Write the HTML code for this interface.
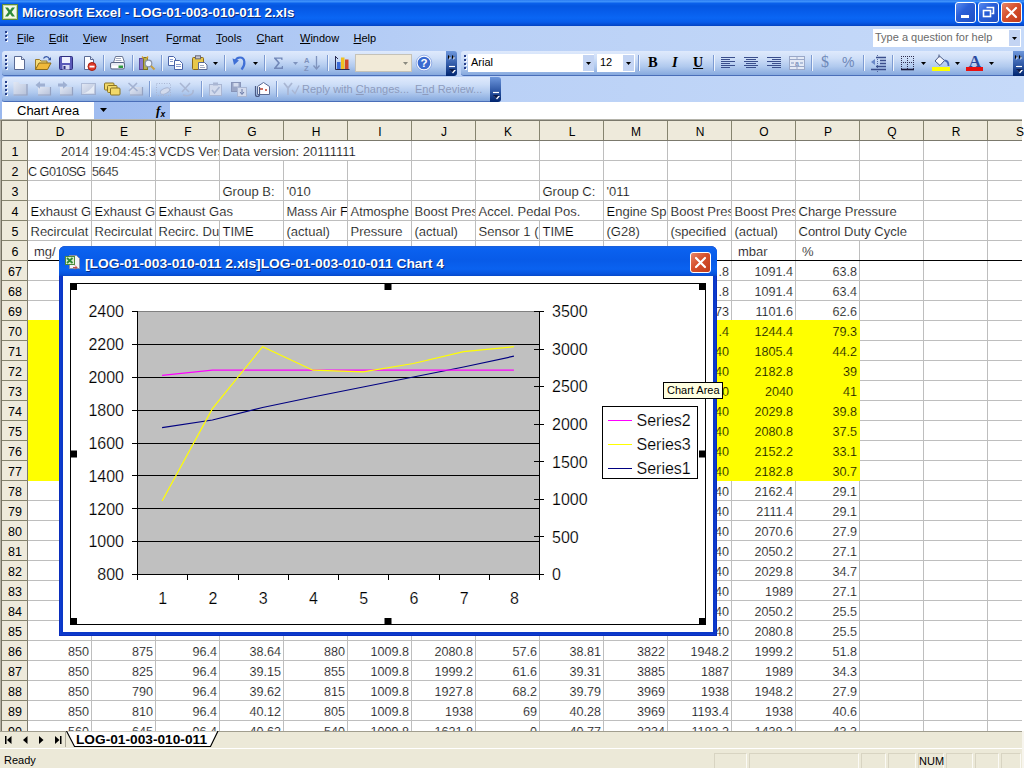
<!DOCTYPE html>
<html><head><meta charset="utf-8"><title>Microsoft Excel - LOG-01-003-010-011 2.xls</title>
<style>
*{box-sizing:border-box;margin:0;padding:0}
html,body{width:1024px;height:768px;overflow:hidden;background:#fff}
body{position:relative;font-family:"Liberation Sans",sans-serif;font-size:11px;color:#000}
.abs{position:absolute}
/* title bar */
#title{position:absolute;left:0;top:0;width:1024px;height:26px;
 background:linear-gradient(to bottom,#2c7df2 0px,#3c90fa 1.5px,#0a60ea 3.5px,#0456e0 6px,#075cea 11px,#0a66f4 18px,#085cea 22px,#044acf 25px,#0340be 26px)}
#title .txt{position:absolute;left:22px;top:5px;transform:scaleX(1.03);transform-origin:0 0;font-weight:bold;font-size:13px;color:#fff;text-shadow:1px 1px 0 #0a2a7a;white-space:nowrap;letter-spacing:0px}
.wbtn{position:absolute;top:2px;width:21px;height:21px;border:1px solid #fff;border-radius:3px;
 background:linear-gradient(135deg,#5a8cf0 0%,#2a5fd8 40%,#1f4fc4 100%)}
.wbtn.close{background:linear-gradient(135deg,#e8866a 0%,#d6502c 45%,#c03a1a 100%)}
/* menu bar / dock */
#dock{position:absolute;left:0;top:26px;width:1024px;height:76px;background:linear-gradient(to right,#9ebcf0 0%,#b9d0f6 45%,#c6daf9 100%)}
.menu{position:absolute;top:32px;font-size:11px;white-space:nowrap;color:#000}
.menu u{text-decoration:underline}
.tb{position:absolute;height:25px;border-radius:3px 0 0 3px;
 background:linear-gradient(to bottom,#dfeafc 0%,#cfdff8 30%,#b0c9ee 65%,#86a9de 100%);border-bottom:1px solid #4a6eb8}
.grip{position:absolute;width:3px;height:15px;
 background:repeating-linear-gradient(to bottom,#27408b 0,#27408b 2px,transparent 2px,transparent 4px) 0 0/2px 14px no-repeat,
 repeating-linear-gradient(to bottom,#f4f8ff 0,#f4f8ff 2px,transparent 2px,transparent 4px) 1px 1px/2px 14px no-repeat}
.grip.m{height:11px;background-size:2px 10px,2px 10px}
.sep{position:absolute;width:1px;height:16px;background:#7d9bd2;box-shadow:1px 0 0 #eef4fd}
.cap{position:absolute;width:11px;height:25px;border-radius:0 3px 3px 0;background:linear-gradient(to bottom,#6e97dc 0%,#2f58a6 55%,#00256f 100%)}
/* formula bar */
#fbar{position:absolute;left:0;top:102px;width:1024px;height:18px;background:#fff}
/* sheet */
#sheet{position:absolute;left:0;top:0;width:1024px;height:731px;overflow:hidden;clip-path:inset(120px 0 0 0)}
.vl{position:absolute;top:120px;width:1px;height:611px;background:#bebebe}
.hl{position:absolute;left:0;width:1022px;height:1px;background:#bebebe}
.yel{position:absolute;background:#ffff00}
#colhdr{position:absolute;left:0;top:120px;width:1022px;height:21px;background:#eeeadb;border-top:1px solid #7b796c;border-bottom:1px solid #7b796c}
.ch{position:absolute;top:0;width:64px;height:19px;line-height:22px;text-align:center;font-size:12px;border-right:1px solid #86846f;padding-left:1px}
#rowhdr{position:absolute;left:0;top:141px;width:28px;height:600px;background:#eeeadb;border-right:1px solid #7b796c;border-left:1px solid #b5b1a3;box-shadow:inset 1px 0 0 #747061}
.rh{position:absolute;left:1px;width:26px;height:20px;line-height:22px;text-align:center;font-size:12.5px;border-bottom:1px solid #86846f}
#corner{position:absolute;left:0;top:120px;width:28px;height:21px;background:#eeeadb;border:1px solid #7b796c;border-left:1px solid #b5b1a3;box-shadow:inset 1px 0 0 #747061}
.c{position:absolute;height:19px;line-height:22px;font-size:12.600px;white-space:nowrap;overflow:hidden;padding:0 2px 0 3px}
.c.nopad{padding-left:0}
/* bottom */
#tabbar{position:absolute;left:0;top:731px;width:1024px;height:17px;background:#ece9d8;border-top:1px solid #a19e8f}
#status{position:absolute;left:0;top:748px;width:1024px;height:20px;background:#ece9d8;border-top:1px solid #fff}
.sp{position:absolute;top:4px;height:17px;border:1px solid #d8d4c2;border-right-color:#fbfaf5;border-bottom-color:#fbfaf5;font-size:11px;line-height:14px;text-align:center}
.c.t{font-size:13px;padding-left:2.500px}
.c.r6{padding-left:6px}
.c.small{font-size:12.600px;letter-spacing:-0.5px}
.c.ov{background:#fff}
#chartsvg text{stroke:#fff;stroke-width:.18px}
.c{-webkit-text-stroke:0.2px #fff}
.c.y{-webkit-text-stroke-color:#ffff00}
.c.t.nopad{padding-left:0}

</style></head>
<body>
<div id="title">
 <svg class="abs" style="left:2px;top:4px" width="16" height="16" viewBox="0 0 16 16"><rect x="0.5" y="0.5" width="15" height="15" fill="#f4f8e8" stroke="#5e8a3a"/><rect x="1.5" y="1.5" width="13" height="13" fill="none" stroke="#c8dca8"/><path d="M3 3.5h3l2 2.8 2-2.8h3l-3.4 4.5 3.4 4.5h-3l-2-2.8-2 2.800h-3l3.400-4.500z" fill="#2f8a3a"/></svg>
 <div class="txt">Microsoft Excel - LOG-01-003-010-011 2.xls</div>
 <div class="wbtn" style="left:955px"><div class="abs" style="left:5px;top:12px;width:8px;height:3px;background:#fff"></div></div>
 <div class="wbtn" style="left:978px"><svg width="19" height="19" viewBox="0 0 19 19"><path d="M7.500 4.500h7v6h-2" fill="none" stroke="#fff" stroke-width="1.600"/><rect x="4.500" y="7.500" width="7" height="6" fill="none" stroke="#fff" stroke-width="1.600"/></svg></div>
 <div class="wbtn close" style="left:1001px"><svg width="19" height="19" viewBox="0 0 19 19"><path d="M5 5l9 9M14 5l-9 9" stroke="#fff" stroke-width="2.200" stroke-linecap="round"/></svg></div>
</div>
<div id="dock"></div>
<div class="grip m" style="left:5px;top:31px"></div>
<div class="menu" style="left:17px"><u>F</u>ile</div>
<div class="menu" style="left:49px"><u>E</u>dit</div>
<div class="menu" style="left:83px"><u>V</u>iew</div>
<div class="menu" style="left:121px"><u>I</u>nsert</div>
<div class="menu" style="left:166px">F<u>o</u>rmat</div>
<div class="menu" style="left:216px"><u>T</u>ools</div>
<div class="menu" style="left:256.5px"><u>C</u>hart</div>
<div class="menu" style="left:300px"><u>W</u>indow</div>
<div class="menu" style="left:353.5px"><u>H</u>elp</div>
<div class="abs" style="left:873px;top:29px;width:148px;height:18px;background:#fff"></div>
<div class="abs" style="left:1009px;top:30px;width:11px;height:16px;background:#c3d4f3"></div>
<div class="abs" style="left:875px;top:31px;font-size:11px;color:#6a6a6a;white-space:nowrap" id="helptxt">Type a question for help</div>
<div class="tb" style="left:2px;top:51px;width:446px"></div><div class="cap" style="left:446px;top:51px"></div>
<div class="tb" style="left:461px;top:51px;width:554px"></div><div class="cap" style="left:1013px;top:51px;border-radius:0"></div>
<div class="tb" style="left:2px;top:77px;width:490px"></div><div class="cap" style="left:490px;top:77px"></div>
<div class="grip" style="left:5px;top:55px"></div>
<div class="grip" style="left:464px;top:55px"></div>
<div class="grip" style="left:5px;top:81px"></div>
<div class="sep" style="left:103px;top:55px"></div>
<div class="sep" style="left:132px;top:55px"></div>
<div class="sep" style="left:161px;top:55px"></div>
<div class="sep" style="left:224px;top:55px"></div>
<div class="sep" style="left:264px;top:55px"></div>
<div class="sep" style="left:327px;top:55px"></div>
<div class="sep" style="left:638px;top:55px"></div>
<div class="sep" style="left:713px;top:55px"></div>
<div class="sep" style="left:811px;top:55px"></div>
<div class="sep" style="left:863px;top:55px"></div>
<div class="sep" style="left:892px;top:55px"></div>
<div class="sep" style="left:149px;top:81px"></div>
<div class="sep" style="left:201px;top:81px"></div>
<div class="sep" style="left:276px;top:81px"></div>
<div class="abs" style="left:355px;top:54px;width:57px;height:18px;background:#f1ead8;border:1px solid #c5c2b8"></div>
<div class="abs" style="left:468px;top:54px;width:126px;height:18px;background:#fff"></div><div class="abs" style="left:583px;top:55px;width:11px;height:16px;background:#c3d4f3"></div>
<div class="abs" style="left:597px;top:54px;width:38px;height:18px;background:#fff"></div><div class="abs" style="left:623px;top:55px;width:11px;height:16px;background:#c3d4f3"></div>
<div class="abs" style="left:471px;top:56px;font-size:11px">Arial</div>
<div class="abs" style="left:600px;top:56px;font-size:11px">12</div>
<div class="abs" style="left:648px;top:54px;font:bold 14.500px 'Liberation Serif',serif">B</div>
<div class="abs" style="left:672px;top:54px;font:italic bold 14.500px 'Liberation Serif',serif">I</div>
<div class="abs" style="left:693px;top:55px;font:bold 14px 'Liberation Serif',serif;text-decoration:underline">U</div>
<div class="abs" style="left:821px;top:53px;font:16px 'Liberation Serif',serif;color:#6f88b8">$</div>
<div class="abs" style="left:842px;top:54px;font:14px 'Liberation Sans',sans-serif;color:#6f88b8">%</div>
<div class="abs" style="left:302px;top:83px;font-size:11px;color:#8d9bbd;white-space:nowrap" id="rwc">Reply with <u>C</u>hanges...</div>
<div class="abs" style="left:415px;top:83px;font-size:11px;color:#8d9bbd;white-space:nowrap" id="endrev">E<u>n</u>d Review...</div>
<svg class="abs" style="left:0;top:26px" width="1024" height="76" viewBox="0 26 1024 76">
<path d="M1012 37h5l-2.500 3z" fill="#000"/>
<path d="M586 62h5l-2.500 3z" fill="#000"/>
<path d="M626 62h5l-2.500 3z" fill="#000"/>
<path d="M403 62h5l-2.500 3z" fill="#8a8a80"/>
<path d="M213 62h5l-2.500 3z" fill="#000"/>
<path d="M253 62h5l-2.500 3z" fill="#000"/>
<path d="M293 62h5l-2.500 3z" fill="#7f93bd"/>
<path d="M921 62h5l-2.500 3z" fill="#000"/>
<path d="M955 62h5l-2.500 3z" fill="#000"/>
<path d="M989 62h5l-2.500 3z" fill="#000"/>
<path d="M448 55l2.500 2-2.500 2zM452 55l2.500 2-2.500 2z" fill="#000"/><path d="M449 56l2.500 2-2.500 2zM453 56l2.500 2-2.500 2z" fill="#fff" opacity=".55"/>
<path d="M449 66.5h6" stroke="#fff" stroke-width="1.200"/><path d="M450 70h6l-3 3.500z" fill="#fff"/><path d="M449 69h6l-3 3.500z" fill="#0a1a4a"/>
<path d="M1015 55l2.500 2-2.500 2zM1019 55l2.500 2-2.500 2z" fill="#000"/><path d="M1016 56l2.500 2-2.500 2zM1020 56l2.500 2-2.500 2z" fill="#fff" opacity=".55"/>
<path d="M1016 66.5h6" stroke="#fff" stroke-width="1.200"/><path d="M1017 70h6l-3 3.500z" fill="#fff"/><path d="M1016 69h6l-3 3.500z" fill="#0a1a4a"/>
<path d="M493 92.5h6" stroke="#fff" stroke-width="1.200"/><path d="M494 96h6l-3 3.500z" fill="#fff"/><path d="M493 95h6l-3 3.500z" fill="#0a1a4a"/>
<path d="M14.500 56.500h7l3 3v10h-10z" fill="#fdfdff" stroke="#5a6a94"/><path d="M21.500 56.500v3h3" fill="#dfe6f6" stroke="#5a6a94"/>
<path d="M35.500 69.500v-10h4l1.500 1.500h6v2" fill="#f5dc78" stroke="#9a7a2a"/><path d="M35.500 69.500l3.500-6.500h12l-3.500 6.500z" fill="#f0b93a" stroke="#8a6a1a"/><path d="M43.500 58.500c1.500-2.500 4.500-2.500 6 0.500" fill="none" stroke="#3a5aa8" stroke-width="1.300"/><path d="M51 57v3.200h-3.200z" fill="#3a5aa8"/>
<rect x="59.500" y="56.500" width="13" height="13" rx="1" fill="#5a5ab8" stroke="#2e2e80"/><rect x="62" y="57" width="8" height="6" fill="#eef0ff"/><rect x="62.500" y="65" width="7" height="4.500" fill="#d8dbf3"/><rect x="63.500" y="66" width="2" height="3" fill="#2e2e80"/>
<path d="M84.500 56.500h6l3 3v10h-9z" fill="#fdfdff" stroke="#5a6a94"/><path d="M90.500 56.500v3h3" fill="#dfe6f6" stroke="#5a6a94"/><circle cx="92" cy="66.500" r="4" fill="#e03a2a" stroke="#a8200f"/><rect x="89.500" y="65.700" width="5" height="1.800" fill="#fff"/>
<path d="M113.500 62.500l2-6h7l2 6" fill="#fff" stroke="#6a7694"/><rect x="110.500" y="62.500" width="14" height="6.500" rx="1.500" fill="#e6eaf3" stroke="#5a6684"/><rect x="112" y="65.500" width="11" height="2.500" fill="#fff"/><rect x="118.500" y="65.500" width="4.500" height="2.500" fill="#2f9a40"/><path d="M116 58.500h5M115.500 60.500h6" stroke="#8a94b0" stroke-width="0.800"/>
<rect x="139.500" y="58.500" width="4" height="11" fill="#8a7ad0" stroke="#5a4aa0"/><rect x="143.500" y="57.500" width="4" height="12" fill="#b8b050" stroke="#7a7420"/><path d="M142 56.500l1.500 2M148 56.500l-1.500 2" stroke="#d8a030" stroke-width="1.400"/><circle cx="148.500" cy="63.500" r="3.300" fill="#eef4ff" stroke="#8a94a8" stroke-width="1.200"/><path d="M151 66l3.500 3.500" stroke="#c8a040" stroke-width="2"/>
<path d="M168.500 56.500h5l2 2v7h-7z" fill="#fff" stroke="#4a64a8"/><path d="M174.500 60.500h5l3 3v6h-8z" fill="#fff" stroke="#4a64a8"/><path d="M170 59.500h3M170 61.500h3M176 64.500h5M176 66.500h5" stroke="#7a90c8" stroke-width="0.900"/>
<rect x="192.500" y="57.500" width="11" height="12" rx="1" fill="#e8c84a" stroke="#8a6a1a"/><rect x="195.500" y="55.800" width="5" height="3" fill="#c8c8d0" stroke="#6a6a7a"/><path d="M198.500 62.500h6l2.500 2.500v4.500h-8.500z" fill="#fff" stroke="#5a6a94"/><path d="M200 65.500h4M200 67.500h5" stroke="#8a94b0" stroke-width="0.800"/>
<path d="M241.500 69.500c4.500-5 3.500-12-1.500-12-2.500 0-4 1.500-4.500 3.500" fill="none" stroke="#3f6fd6" stroke-width="2.200"/><path d="M232.500 58.500l6.500 2-5 4.500z" fill="#3f6fd6"/>
<path d="M274 57.500h8.500v2.500h-1l-.5-1.200h-4.500l3.500 4.200-3.500 4.500h5l.5-1.500h1v3h-9v-1l4-5-4-4.500z" fill="#7288b8"/>
<text x="304" y="63" font-family="Liberation Sans" font-size="7.500" font-weight="bold" fill="#7f93bd">A</text><text x="304" y="70.500" font-family="Liberation Sans" font-size="7.500" font-weight="bold" fill="#7f93bd">Z</text><path d="M316.500 56v12M313.500 65.500l3 3.500 3-3.500" stroke="#7f93bd" stroke-width="1.300" fill="none"/>
<path d="M335.500 56v13.500h14" fill="none" stroke="#2a2a50" stroke-width="1"/><rect x="337" y="62" width="3.500" height="7" fill="#3a6ad8"/><rect x="341" y="57.500" width="3.500" height="11.500" fill="#f0c020"/><rect x="345" y="59.500" width="3.500" height="9.500" fill="#d04828"/><path d="M336 57l2 2" stroke="#2a2a50"/>
<circle cx="424" cy="63" r="7" fill="#3a6ad0" stroke="#fff" stroke-width="1.300"/><circle cx="424" cy="63" r="7.800" fill="none" stroke="#6a8cd8" stroke-width="0.600"/><text x="424" y="67.300" text-anchor="middle" font-family="Liberation Sans" font-weight="bold" font-size="11.500" fill="#fff">?</text>
<path d="M721 57.5h14M721 59.5h9M721 61.5h14M721 63.5h9M721 65.5h14M721 67.5h9" stroke="#3a4e8c" stroke-width="1" shape-rendering="crispEdges"/>
<path d="M744.0 57.5h14M746.0 59.5h10M744.0 61.5h14M746.0 63.5h10M744.0 65.5h14M746.0 67.5h10" stroke="#3a4e8c" stroke-width="1" shape-rendering="crispEdges"/>
<path d="M767 57.5h14M772 59.5h9M767 61.5h14M772 63.5h9M767 65.5h14M772 67.5h9" stroke="#3a4e8c" stroke-width="1" shape-rendering="crispEdges"/>
<rect x="789.500" y="56.500" width="15" height="13" fill="#e4eaf6" stroke="#9aa8c8"/><path d="M789.500 59.500h15M789.500 66.500h15M797 56.500v3M797 66.500v3" stroke="#9aa8c8"/><text x="797" y="66" text-anchor="middle" font-family="Liberation Sans" font-size="7" font-weight="bold" fill="#7f93bd">a</text><path d="M791 63h3M803 63h-3" stroke="#7f93bd"/>
<path d="M876 57.500h10M880 60.500h6M880 63.500h6M876 66.500h10M871 69.500h15" stroke="#3a4e8c" stroke-width="1.600"/><path d="M871 62l4-3v6z" fill="#6a88c8"/><path d="M877.500 55v17" stroke="#3a4e8c" stroke-width="0.800" stroke-dasharray="1 1"/>
<path d="M901 56h1v1h-1zM901 58h1v1h-1zM901 60h1v1h-1zM901 62h1v1h-1zM901 64h1v1h-1zM901 66h1v1h-1zM901 68h1v1h-1zM903 56h1v1h-1zM903 62h1v1h-1zM905 56h1v1h-1zM905 62h1v1h-1zM907 56h1v1h-1zM907 58h1v1h-1zM907 60h1v1h-1zM907 62h1v1h-1zM907 64h1v1h-1zM907 66h1v1h-1zM907 68h1v1h-1zM909 56h1v1h-1zM909 62h1v1h-1zM911 56h1v1h-1zM911 62h1v1h-1zM913 56h1v1h-1zM913 58h1v1h-1zM913 60h1v1h-1zM913 62h1v1h-1zM913 64h1v1h-1zM913 66h1v1h-1zM913 68h1v1h-1z" fill="#2e2e50" shape-rendering="crispEdges"/><path d="M901 69.500h13" stroke="#1a1a3a" stroke-width="1.600"/>
<path d="M939.500 56l5 4.500-4.500 5-5-4.500z" fill="#f4f6fc" stroke="#4a5a84"/><path d="M944.500 60.500c2.500 0 4 2 4 5.500" fill="none" stroke="#4a6ab8" stroke-width="1.800"/><path d="M939 54.500v3" stroke="#4a5a84"/><rect x="932" y="67" width="18" height="4" fill="#ffff00"/>
<text x="975" y="66.500" text-anchor="middle" font-family="Liberation Serif" font-weight="bold" font-size="17" fill="#2a4aa0">A</text><rect x="966" y="67" width="17" height="4" fill="#e81010"/>
<defs><linearGradient id="gg" x1="0" y1="0" x2="1" y2="1"><stop offset="0" stop-color="#e2e8f4"/><stop offset="1" stop-color="#b4bfd8"/></linearGradient></defs>
<path d="M13.5 82h5l1.500 2h7.5v11.5h-14z" fill="url(#gg)"/><path d="M27.0 84v11.0h-13.5" fill="none" stroke="#94a2c2" stroke-width="1.200"/>
<path d="M38 87h13v8.5h-13z" fill="url(#gg)"/><path d="M50.5 87v8.0h-12.5" fill="none" stroke="#94a2c2" stroke-width="1.200"/>
<path d="M35.500 85l4.500-3.800v2.300h5v3h-5v2.300z" fill="#9fb0d2"/>
<path d="M60 87h13v8.5h-13z" fill="url(#gg)"/><path d="M72.5 87v8.0h-12.5" fill="none" stroke="#94a2c2" stroke-width="1.200"/>
<path d="M67.500 85l-4.500-3.800v2.300h-5v3h5v2.300z" fill="#9fb0d2"/>
<rect x="81.500" y="83.500" width="14" height="11" fill="url(#gg)" stroke="#8a98ba" stroke-dasharray="1 1"/><path d="M83 93.500c4-1 8-4 11-8.500v8.500z" fill="#eef2fa" opacity=".8"/>
<rect x="104.5" y="83" width="9.500" height="7" rx="1" fill="#f2d96a" stroke="#8a7424"/>
<rect x="107.5" y="85.5" width="9.500" height="7" rx="1" fill="#f2d96a" stroke="#8a7424"/>
<rect x="110.5" y="88" width="9.500" height="7" rx="1" fill="#f2d96a" stroke="#8a7424"/>
<path d="M130 87h13v8.5h-13z" fill="url(#gg)"/><path d="M142.5 87v8.0h-12.5" fill="none" stroke="#94a2c2" stroke-width="1.200"/>
<path d="M128.500 83l9 8M137 83l-8 8" stroke="#a3b1d0" stroke-width="1.600"/>
<rect x="156.500" y="83.500" width="14" height="12" fill="none" stroke="#a9b6d3" stroke-dasharray="1 1.500"/><ellipse cx="165" cy="91" rx="5" ry="2.600" transform="rotate(-25 165 91)" fill="#d3dbed" stroke="#a9b6d3"/>
<path d="M180 83l9 9M190 83l-8 9" stroke="#a9b6d3" stroke-width="1.500"/><path d="M183 95c6 2 11-1 10-5" fill="none" stroke="#a9b6d3" stroke-width="1.500"/>
<rect x="209.500" y="84.500" width="12" height="11" fill="#d3dbed" stroke="#a9b6d3"/><rect x="213" y="82.500" width="5" height="3" fill="#a9b6d3"/><path d="M212 90l2.500 3 5-6" fill="none" stroke="#a9b6d3" stroke-width="1.600"/>
<rect x="231.500" y="82.500" width="9" height="9" fill="#9aa6c6" stroke="#8794b8"/><rect x="233.500" y="83" width="5" height="3.500" fill="#d3dbed"/><rect x="237.500" y="87.500" width="9" height="9" fill="#d3dbed" stroke="#a9b6d3"/><path d="M242 89v5M240 92l2 2.500 2-2.500" stroke="#6a7aa8" fill="none"/>
<path d="M257.500 86.500l6-4 6 4v8h-12z" fill="#fdfdff" stroke="#5a6a94"/><path d="M260 89h3M265 90h2" stroke="#c04030" stroke-width="1.400"/><path d="M255.500 86v8.500a2 2 0 0 0 4 0v-7.500" fill="none" stroke="#4a5a84" stroke-width="1.200"/>
<path d="M284 83l4 5 4-5M288 88v7" fill="none" stroke="#a9b6d3" stroke-width="1.800"/><path d="M292 90l3 3.500 4-8" fill="none" stroke="#a9b6d3" stroke-width="1.300"/>
</svg>
<div id="fbar"></div>
<div class="abs" style="left:0;top:102px;width:170px;height:17px;background:linear-gradient(to right,#9ab8ee,#a3bff1)"></div><div class="abs" style="left:0;top:119px;width:1022px;height:1px;background:#b4b3aa"></div>
<div class="abs" style="left:2px;top:102px;width:92px;height:17px;background:#fff"></div>
<div class="abs" style="left:17px;top:103px;font-size:13px;white-space:nowrap" id="namebox">Chart Area</div>
<svg class="abs" style="left:95px;top:102px" width="80" height="18" viewBox="95 102 80 18"><path d="M100 108h7l-3.500 4z" fill="#000"/><text x="156" y="115" font-family="Liberation Serif" font-style="italic" font-weight="bold" font-size="13" fill="#000">f</text><text x="160.500" y="116.500" font-family="Liberation Sans" font-weight="bold" font-style="italic" font-size="8.500" fill="#000">x</text></svg><div id="sheet">
<div class="yel" style="left:28px;top:320px;width:832px;height:161px"></div>
<div class="vl" style="left:27px"></div>
<div class="vl" style="left:91px"></div>
<div class="vl" style="left:155px"></div>
<div class="vl" style="left:219px"></div>
<div class="vl" style="left:283px"></div>
<div class="vl" style="left:347px"></div>
<div class="vl" style="left:411px"></div>
<div class="vl" style="left:475px"></div>
<div class="vl" style="left:539px"></div>
<div class="vl" style="left:603px"></div>
<div class="vl" style="left:667px"></div>
<div class="vl" style="left:731px"></div>
<div class="vl" style="left:795px"></div>
<div class="vl" style="left:859px"></div>
<div class="vl" style="left:923px"></div>
<div class="vl" style="left:987px"></div>
<div class="vl" style="left:1051px"></div>
<div class="hl" style="top:140px"></div>
<div class="hl" style="top:160px"></div>
<div class="hl" style="top:180px"></div>
<div class="hl" style="top:200px"></div>
<div class="hl" style="top:220px"></div>
<div class="hl" style="top:240px"></div>
<div class="hl" style="top:260px"></div>
<div class="hl" style="top:280px"></div>
<div class="hl" style="top:300px"></div>
<div class="hl" style="top:320px"></div>
<div class="hl" style="top:340px"></div>
<div class="hl" style="top:360px"></div>
<div class="hl" style="top:380px"></div>
<div class="hl" style="top:400px"></div>
<div class="hl" style="top:420px"></div>
<div class="hl" style="top:440px"></div>
<div class="hl" style="top:460px"></div>
<div class="hl" style="top:480px"></div>
<div class="hl" style="top:500px"></div>
<div class="hl" style="top:520px"></div>
<div class="hl" style="top:540px"></div>
<div class="hl" style="top:560px"></div>
<div class="hl" style="top:580px"></div>
<div class="hl" style="top:600px"></div>
<div class="hl" style="top:620px"></div>
<div class="hl" style="top:640px"></div>
<div class="hl" style="top:660px"></div>
<div class="hl" style="top:680px"></div>
<div class="hl" style="top:700px"></div>
<div class="hl" style="top:720px"></div>
<div class="hl" style="top:740px"></div>
<div class="yel" style="left:28px;top:320px;width:832px;height:161px"></div>
<div style="position:absolute;left:28px;top:260px;width:994px;height:1px;background:#000"></div>
<div id="colhdr">
<div class="ch" style="left:28px">D</div>
<div class="ch" style="left:92px">E</div>
<div class="ch" style="left:156px">F</div>
<div class="ch" style="left:220px">G</div>
<div class="ch" style="left:284px">H</div>
<div class="ch" style="left:348px">I</div>
<div class="ch" style="left:412px">J</div>
<div class="ch" style="left:476px">K</div>
<div class="ch" style="left:540px">L</div>
<div class="ch" style="left:604px">M</div>
<div class="ch" style="left:668px">N</div>
<div class="ch" style="left:732px">O</div>
<div class="ch" style="left:796px">P</div>
<div class="ch" style="left:860px">Q</div>
<div class="ch" style="left:924px">R</div>
<div class="ch" style="left:988px">S</div>
</div>
<div id="rowhdr">
<div class="rh" style="top:0px">1</div>
<div class="rh" style="top:20px">2</div>
<div class="rh" style="top:40px">3</div>
<div class="rh" style="top:60px">4</div>
<div class="rh" style="top:80px">5</div>
<div class="rh" style="top:100px">6</div>
<div class="rh" style="top:120px">67</div>
<div class="rh" style="top:140px">68</div>
<div class="rh" style="top:160px">69</div>
<div class="rh" style="top:180px">70</div>
<div class="rh" style="top:200px">71</div>
<div class="rh" style="top:220px">72</div>
<div class="rh" style="top:240px">73</div>
<div class="rh" style="top:260px">74</div>
<div class="rh" style="top:280px">75</div>
<div class="rh" style="top:300px">76</div>
<div class="rh" style="top:320px">77</div>
<div class="rh" style="top:340px">78</div>
<div class="rh" style="top:360px">79</div>
<div class="rh" style="top:380px">80</div>
<div class="rh" style="top:400px">81</div>
<div class="rh" style="top:420px">82</div>
<div class="rh" style="top:440px">83</div>
<div class="rh" style="top:460px">84</div>
<div class="rh" style="top:480px">85</div>
<div class="rh" style="top:500px">86</div>
<div class="rh" style="top:520px">87</div>
<div class="rh" style="top:540px">88</div>
<div class="rh" style="top:560px">89</div>
<div class="rh" style="top:580px">90</div>
</div>
<div id="corner"></div>
<div class="c " style="left:28px;top:141px;width:63px;text-align:right">2014</div>
<div class="c  t" style="left:92px;top:141px;width:63px;text-align:left">19:04:45:3</div>
<div class="c  t" style="left:156px;top:141px;width:63px;text-align:left">VCDS Vers</div>
<div class="c  t ov" style="left:220px;top:141px;width:191px;text-align:left">Data version: 20111111</div>
<div class="c nopad small t" style="left:28px;top:161px;width:63px;text-align:left">C G010SG</div>
<div class="c nopad small t" style="left:92px;top:161px;width:63px;text-align:left">5645</div>
<div class="c  t" style="left:220px;top:181px;width:63px;text-align:left">Group B:</div>
<div class="c  t" style="left:284px;top:181px;width:63px;text-align:left">&#x27;010</div>
<div class="c  t" style="left:540px;top:181px;width:63px;text-align:left">Group C:</div>
<div class="c  t" style="left:604px;top:181px;width:63px;text-align:left">&#x27;011</div>
<div class="c  t" style="left:28px;top:201px;width:63px;text-align:left">Exhaust G</div>
<div class="c  t" style="left:92px;top:201px;width:63px;text-align:left">Exhaust G</div>
<div class="c  t ov" style="left:156px;top:201px;width:127px;text-align:left">Exhaust Gas</div>
<div class="c  t" style="left:284px;top:201px;width:63px;text-align:left">Mass Air F</div>
<div class="c  t" style="left:348px;top:201px;width:63px;text-align:left">Atmosphe</div>
<div class="c  t" style="left:412px;top:201px;width:63px;text-align:left">Boost Pres</div>
<div class="c  t ov" style="left:476px;top:201px;width:127px;text-align:left">Accel. Pedal Pos.</div>
<div class="c  t" style="left:604px;top:201px;width:63px;text-align:left">Engine Sp</div>
<div class="c  t" style="left:668px;top:201px;width:63px;text-align:left">Boost Pres</div>
<div class="c  t" style="left:732px;top:201px;width:63px;text-align:left">Boost Pres</div>
<div class="c  t ov" style="left:796px;top:201px;width:127px;text-align:left">Charge Pressure</div>
<div class="c  t" style="left:28px;top:221px;width:63px;text-align:left">Recirculat</div>
<div class="c  t" style="left:92px;top:221px;width:63px;text-align:left">Recirculat</div>
<div class="c  t" style="left:156px;top:221px;width:63px;text-align:left">Recirc. Du</div>
<div class="c  t" style="left:220px;top:221px;width:63px;text-align:left">TIME</div>
<div class="c  t" style="left:284px;top:221px;width:63px;text-align:left">(actual)</div>
<div class="c  t" style="left:348px;top:221px;width:63px;text-align:left">Pressure</div>
<div class="c  t" style="left:412px;top:221px;width:63px;text-align:left">(actual)</div>
<div class="c  t" style="left:476px;top:221px;width:63px;text-align:left">Sensor 1 (</div>
<div class="c  t" style="left:540px;top:221px;width:63px;text-align:left">TIME</div>
<div class="c  t" style="left:604px;top:221px;width:63px;text-align:left">(G28)</div>
<div class="c  t" style="left:668px;top:221px;width:63px;text-align:left">(specified</div>
<div class="c  t" style="left:732px;top:221px;width:63px;text-align:left">(actual)</div>
<div class="c  t ov" style="left:796px;top:221px;width:127px;text-align:left">Control Duty Cycle</div>
<div class="c r6 t" style="left:28px;top:241px;width:63px;text-align:left">mg/</div>
<div class="c r6 t" style="left:92px;top:241px;width:63px;text-align:left">mg/H</div>
<div class="c r6 t" style="left:156px;top:241px;width:63px;text-align:left">%</div>
<div class="c r6 t" style="left:220px;top:241px;width:63px;text-align:left">STAMP</div>
<div class="c r6 t" style="left:284px;top:241px;width:63px;text-align:left">mg/H</div>
<div class="c r6 t" style="left:348px;top:241px;width:63px;text-align:left">mbar</div>
<div class="c r6 t" style="left:412px;top:241px;width:63px;text-align:left">mbar</div>
<div class="c r6 t" style="left:476px;top:241px;width:63px;text-align:left">%</div>
<div class="c r6 t" style="left:540px;top:241px;width:63px;text-align:left">STAMP</div>
<div class="c r6 t" style="left:604px;top:241px;width:63px;text-align:left">/min</div>
<div class="c r6 t" style="left:668px;top:241px;width:63px;text-align:left">mbar</div>
<div class="c r6 t" style="left:732px;top:241px;width:63px;text-align:left">mbar</div>
<div class="c r6 t" style="left:796px;top:241px;width:63px;text-align:left">%</div>
<div class="c " style="left:668px;top:261px;width:63px;text-align:right">.8</div>
<div class="c " style="left:732px;top:261px;width:63px;text-align:right">1091.4</div>
<div class="c " style="left:796px;top:261px;width:63px;text-align:right">63.8</div>
<div class="c " style="left:668px;top:281px;width:63px;text-align:right">.8</div>
<div class="c " style="left:732px;top:281px;width:63px;text-align:right">1091.4</div>
<div class="c " style="left:796px;top:281px;width:63px;text-align:right">63.4</div>
<div class="c " style="left:668px;top:301px;width:63px;text-align:right">73</div>
<div class="c " style="left:732px;top:301px;width:63px;text-align:right">1101.6</div>
<div class="c " style="left:796px;top:301px;width:63px;text-align:right">62.6</div>
<div class="c  y" style="left:668px;top:321px;width:63px;text-align:right">.4</div>
<div class="c  y" style="left:732px;top:321px;width:63px;text-align:right">1244.4</div>
<div class="c  y" style="left:796px;top:321px;width:63px;text-align:right">79.3</div>
<div class="c  y" style="left:668px;top:341px;width:63px;text-align:right">2040</div>
<div class="c  y" style="left:732px;top:341px;width:63px;text-align:right">1805.4</div>
<div class="c  y" style="left:796px;top:341px;width:63px;text-align:right">44.2</div>
<div class="c  y" style="left:668px;top:361px;width:63px;text-align:right">2040</div>
<div class="c  y" style="left:732px;top:361px;width:63px;text-align:right">2182.8</div>
<div class="c  y" style="left:796px;top:361px;width:63px;text-align:right">39</div>
<div class="c  y" style="left:668px;top:381px;width:63px;text-align:right">2040</div>
<div class="c  y" style="left:732px;top:381px;width:63px;text-align:right">2040</div>
<div class="c  y" style="left:796px;top:381px;width:63px;text-align:right">41</div>
<div class="c  y" style="left:668px;top:401px;width:63px;text-align:right">2040</div>
<div class="c  y" style="left:732px;top:401px;width:63px;text-align:right">2029.8</div>
<div class="c  y" style="left:796px;top:401px;width:63px;text-align:right">39.8</div>
<div class="c  y" style="left:668px;top:421px;width:63px;text-align:right">2040</div>
<div class="c  y" style="left:732px;top:421px;width:63px;text-align:right">2080.8</div>
<div class="c  y" style="left:796px;top:421px;width:63px;text-align:right">37.5</div>
<div class="c  y" style="left:668px;top:441px;width:63px;text-align:right">2040</div>
<div class="c  y" style="left:732px;top:441px;width:63px;text-align:right">2152.2</div>
<div class="c  y" style="left:796px;top:441px;width:63px;text-align:right">33.1</div>
<div class="c  y" style="left:668px;top:461px;width:63px;text-align:right">2040</div>
<div class="c  y" style="left:732px;top:461px;width:63px;text-align:right">2182.8</div>
<div class="c  y" style="left:796px;top:461px;width:63px;text-align:right">30.7</div>
<div class="c " style="left:668px;top:481px;width:63px;text-align:right">2040</div>
<div class="c " style="left:732px;top:481px;width:63px;text-align:right">2162.4</div>
<div class="c " style="left:796px;top:481px;width:63px;text-align:right">29.1</div>
<div class="c " style="left:668px;top:501px;width:63px;text-align:right">2040</div>
<div class="c " style="left:732px;top:501px;width:63px;text-align:right">2111.4</div>
<div class="c " style="left:796px;top:501px;width:63px;text-align:right">29.1</div>
<div class="c " style="left:668px;top:521px;width:63px;text-align:right">2040</div>
<div class="c " style="left:732px;top:521px;width:63px;text-align:right">2070.6</div>
<div class="c " style="left:796px;top:521px;width:63px;text-align:right">27.9</div>
<div class="c " style="left:668px;top:541px;width:63px;text-align:right">2040</div>
<div class="c " style="left:732px;top:541px;width:63px;text-align:right">2050.2</div>
<div class="c " style="left:796px;top:541px;width:63px;text-align:right">27.1</div>
<div class="c " style="left:668px;top:561px;width:63px;text-align:right">2040</div>
<div class="c " style="left:732px;top:561px;width:63px;text-align:right">2029.8</div>
<div class="c " style="left:796px;top:561px;width:63px;text-align:right">34.7</div>
<div class="c " style="left:668px;top:581px;width:63px;text-align:right">2040</div>
<div class="c " style="left:732px;top:581px;width:63px;text-align:right">1989</div>
<div class="c " style="left:796px;top:581px;width:63px;text-align:right">27.1</div>
<div class="c " style="left:668px;top:601px;width:63px;text-align:right">2040</div>
<div class="c " style="left:732px;top:601px;width:63px;text-align:right">2050.2</div>
<div class="c " style="left:796px;top:601px;width:63px;text-align:right">25.5</div>
<div class="c " style="left:668px;top:621px;width:63px;text-align:right">2040</div>
<div class="c " style="left:732px;top:621px;width:63px;text-align:right">2080.8</div>
<div class="c " style="left:796px;top:621px;width:63px;text-align:right">25.5</div>
<div class="c " style="left:28px;top:641px;width:63px;text-align:right">850</div>
<div class="c " style="left:92px;top:641px;width:63px;text-align:right">875</div>
<div class="c " style="left:156px;top:641px;width:63px;text-align:right">96.4</div>
<div class="c " style="left:220px;top:641px;width:63px;text-align:right">38.64</div>
<div class="c " style="left:284px;top:641px;width:63px;text-align:right">880</div>
<div class="c " style="left:348px;top:641px;width:63px;text-align:right">1009.8</div>
<div class="c " style="left:412px;top:641px;width:63px;text-align:right">2080.8</div>
<div class="c " style="left:476px;top:641px;width:63px;text-align:right">57.6</div>
<div class="c " style="left:540px;top:641px;width:63px;text-align:right">38.81</div>
<div class="c " style="left:604px;top:641px;width:63px;text-align:right">3822</div>
<div class="c " style="left:668px;top:641px;width:63px;text-align:right">1948.2</div>
<div class="c " style="left:732px;top:641px;width:63px;text-align:right">1999.2</div>
<div class="c " style="left:796px;top:641px;width:63px;text-align:right">51.8</div>
<div class="c " style="left:28px;top:661px;width:63px;text-align:right">850</div>
<div class="c " style="left:92px;top:661px;width:63px;text-align:right">825</div>
<div class="c " style="left:156px;top:661px;width:63px;text-align:right">96.4</div>
<div class="c " style="left:220px;top:661px;width:63px;text-align:right">39.15</div>
<div class="c " style="left:284px;top:661px;width:63px;text-align:right">855</div>
<div class="c " style="left:348px;top:661px;width:63px;text-align:right">1009.8</div>
<div class="c " style="left:412px;top:661px;width:63px;text-align:right">1999.2</div>
<div class="c " style="left:476px;top:661px;width:63px;text-align:right">61.6</div>
<div class="c " style="left:540px;top:661px;width:63px;text-align:right">39.31</div>
<div class="c " style="left:604px;top:661px;width:63px;text-align:right">3885</div>
<div class="c " style="left:668px;top:661px;width:63px;text-align:right">1887</div>
<div class="c " style="left:732px;top:661px;width:63px;text-align:right">1989</div>
<div class="c " style="left:796px;top:661px;width:63px;text-align:right">34.3</div>
<div class="c " style="left:28px;top:681px;width:63px;text-align:right">850</div>
<div class="c " style="left:92px;top:681px;width:63px;text-align:right">790</div>
<div class="c " style="left:156px;top:681px;width:63px;text-align:right">96.4</div>
<div class="c " style="left:220px;top:681px;width:63px;text-align:right">39.62</div>
<div class="c " style="left:284px;top:681px;width:63px;text-align:right">815</div>
<div class="c " style="left:348px;top:681px;width:63px;text-align:right">1009.8</div>
<div class="c " style="left:412px;top:681px;width:63px;text-align:right">1927.8</div>
<div class="c " style="left:476px;top:681px;width:63px;text-align:right">68.2</div>
<div class="c " style="left:540px;top:681px;width:63px;text-align:right">39.79</div>
<div class="c " style="left:604px;top:681px;width:63px;text-align:right">3969</div>
<div class="c " style="left:668px;top:681px;width:63px;text-align:right">1938</div>
<div class="c " style="left:732px;top:681px;width:63px;text-align:right">1948.2</div>
<div class="c " style="left:796px;top:681px;width:63px;text-align:right">27.9</div>
<div class="c " style="left:28px;top:701px;width:63px;text-align:right">850</div>
<div class="c " style="left:92px;top:701px;width:63px;text-align:right">810</div>
<div class="c " style="left:156px;top:701px;width:63px;text-align:right">96.4</div>
<div class="c " style="left:220px;top:701px;width:63px;text-align:right">40.12</div>
<div class="c " style="left:284px;top:701px;width:63px;text-align:right">805</div>
<div class="c " style="left:348px;top:701px;width:63px;text-align:right">1009.8</div>
<div class="c " style="left:412px;top:701px;width:63px;text-align:right">1938</div>
<div class="c " style="left:476px;top:701px;width:63px;text-align:right">69</div>
<div class="c " style="left:540px;top:701px;width:63px;text-align:right">40.28</div>
<div class="c " style="left:604px;top:701px;width:63px;text-align:right">3969</div>
<div class="c " style="left:668px;top:701px;width:63px;text-align:right">1193.4</div>
<div class="c " style="left:732px;top:701px;width:63px;text-align:right">1938</div>
<div class="c " style="left:796px;top:701px;width:63px;text-align:right">40.6</div>
<div class="c " style="left:28px;top:721px;width:63px;text-align:right">560</div>
<div class="c " style="left:92px;top:721px;width:63px;text-align:right">645</div>
<div class="c " style="left:156px;top:721px;width:63px;text-align:right">96.4</div>
<div class="c " style="left:220px;top:721px;width:63px;text-align:right">40.62</div>
<div class="c " style="left:284px;top:721px;width:63px;text-align:right">540</div>
<div class="c " style="left:348px;top:721px;width:63px;text-align:right">1009.8</div>
<div class="c " style="left:412px;top:721px;width:63px;text-align:right">1621.8</div>
<div class="c " style="left:476px;top:721px;width:63px;text-align:right">0</div>
<div class="c " style="left:540px;top:721px;width:63px;text-align:right">40.77</div>
<div class="c " style="left:604px;top:721px;width:63px;text-align:right">3234</div>
<div class="c " style="left:668px;top:721px;width:63px;text-align:right">1183.2</div>
<div class="c " style="left:732px;top:721px;width:63px;text-align:right">1438.2</div>
<div class="c " style="left:796px;top:721px;width:63px;text-align:right">43.3</div>
</div><div id="cwin" class="abs" style="left:59px;top:246px;width:658px;height:390px;border-radius:6px 6px 0 0;background:#0a2dbc;overflow:hidden">
 <div class="abs" style="left:0;top:0;width:658px;height:30px;background:linear-gradient(to bottom,#1c5fd8 0px,#0e64f0 2px,#0a60ee 5px,#085be8 14px,#0a62f0 23px,#0854de 28px,#0648c8 30px)"></div>
 <div class="abs" style="left:1px;top:30px;width:656px;height:359px;background:#0e3ccf"></div>
 <div class="abs" style="left:2px;top:30px;width:654px;height:358px;background:#0b38c8"></div>
 <div class="abs" style="left:4px;top:30px;width:650px;height:356px;background:#fff"></div>
 <svg class="abs" style="left:6px;top:8px" width="16" height="16" viewBox="0 0 16 16"><path d="M4.500 1.500h7l3 3v10h-10z" fill="#f2f2f6" stroke="#8a8ea8"/><rect x="0.500" y="2.500" width="9" height="8" fill="#dbeccf" stroke="#4f8a3c"/><path d="M2 4l5.500 5M7.500 4l-5.500 5" stroke="#2e8a36" stroke-width="1.800"/><path d="M8 13.500h4M10 11.500l2 2-2 2" stroke="#c0504a" stroke-width="1" fill="none"/></svg>
 <div class="abs" style="left:25.500px;top:10px;font-weight:bold;font-size:13px;color:#fff;white-space:nowrap;text-shadow:1px 1px 0 #0a2a7a;transform:scaleX(1.0615);transform-origin:0 0" id="ctitle">[LOG-01-003-010-011 2.xls]LOG-01-003-010-011 Chart 4</div>
 <div class="wbtn close" style="left:631px;top:6px"><svg width="19" height="19" viewBox="0 0 19 19"><path d="M5 5l9 9M14 5l-9 9" stroke="#fff" stroke-width="2.200" stroke-linecap="round"/></svg></div>
</div>
<svg class="abs" style="left:63px;top:276px" width="650" height="356" viewBox="63 276 650 356" font-family="Liberation Sans, sans-serif" font-size="16" id="chartsvg">
<rect x="70.500" y="283.500" width="635" height="341" fill="#fff" stroke="#000" shape-rendering="crispEdges"/>
<rect x="137" y="311" width="402" height="263" fill="#c0c0c0" stroke="none"/>
<g stroke="#000" stroke-width="1" shape-rendering="crispEdges"><line x1="137" y1="311.5" x2="539" y2="311.5" stroke="#808080"/><line x1="132" y1="311.5" x2="137" y2="311.5"/><line x1="137" y1="344.5" x2="539" y2="344.5" stroke="#000"/><line x1="132" y1="344.5" x2="137" y2="344.5"/><line x1="137" y1="377.5" x2="539" y2="377.5" stroke="#000"/><line x1="132" y1="377.5" x2="137" y2="377.5"/><line x1="137" y1="410.5" x2="539" y2="410.5" stroke="#000"/><line x1="132" y1="410.5" x2="137" y2="410.5"/><line x1="137" y1="443.5" x2="539" y2="443.5" stroke="#000"/><line x1="132" y1="443.5" x2="137" y2="443.5"/><line x1="137" y1="475.5" x2="539" y2="475.5" stroke="#000"/><line x1="132" y1="475.5" x2="137" y2="475.5"/><line x1="137" y1="508.5" x2="539" y2="508.5" stroke="#000"/><line x1="132" y1="508.5" x2="137" y2="508.5"/><line x1="137" y1="541.5" x2="539" y2="541.5" stroke="#000"/><line x1="132" y1="541.5" x2="137" y2="541.5"/><line x1="137" y1="574.5" x2="539" y2="574.5" stroke="#000"/><line x1="132" y1="574.5" x2="137" y2="574.5"/><line x1="137.500" y1="311" x2="137.500" y2="575"/><line x1="539.500" y1="311" x2="539.500" y2="575"/><line x1="137" y1="574.500" x2="540" y2="574.500"/><line x1="534" y1="311.5" x2="544" y2="311.5"/><line x1="534" y1="349.5" x2="544" y2="349.5"/><line x1="534" y1="386.5" x2="544" y2="386.5"/><line x1="534" y1="424.5" x2="544" y2="424.5"/><line x1="534" y1="461.5" x2="544" y2="461.5"/><line x1="534" y1="499.5" x2="544" y2="499.5"/><line x1="534" y1="536.5" x2="544" y2="536.5"/><line x1="534" y1="574.5" x2="544" y2="574.5"/><line x1="137.5" y1="574" x2="137.5" y2="580"/><line x1="187.5" y1="574" x2="187.5" y2="580"/><line x1="238.5" y1="574" x2="238.5" y2="580"/><line x1="288.5" y1="574" x2="288.5" y2="580"/><line x1="338.5" y1="574" x2="338.5" y2="580"/><line x1="388.5" y1="574" x2="388.5" y2="580"/><line x1="439.5" y1="574" x2="439.5" y2="580"/><line x1="489.5" y1="574" x2="489.5" y2="580"/><line x1="539.5" y1="574" x2="539.5" y2="580"/></g>
<text x="124" y="317.2" text-anchor="end">2400</text><text x="124" y="350.1" text-anchor="end">2200</text><text x="124" y="382.9" text-anchor="end">2000</text><text x="124" y="415.8" text-anchor="end">1800</text><text x="124" y="448.7" text-anchor="end">1600</text><text x="124" y="481.6" text-anchor="end">1400</text><text x="124" y="514.5" text-anchor="end">1200</text><text x="124" y="547.3" text-anchor="end">1000</text><text x="124" y="580.2" text-anchor="end">800</text><text x="552" y="317.2">3500</text><text x="552" y="354.8">3000</text><text x="552" y="392.3">2500</text><text x="552" y="429.9">2000</text><text x="552" y="467.5">1500</text><text x="552" y="505.1">1000</text><text x="552" y="542.6">500</text><text x="552" y="580.2">0</text><text x="162.6" y="603.500" text-anchor="middle">1</text><text x="212.9" y="603.500" text-anchor="middle">2</text><text x="263.1" y="603.500" text-anchor="middle">3</text><text x="313.4" y="603.500" text-anchor="middle">4</text><text x="363.6" y="603.500" text-anchor="middle">5</text><text x="413.9" y="603.500" text-anchor="middle">6</text><text x="464.1" y="603.500" text-anchor="middle">7</text><text x="514.4" y="603.500" text-anchor="middle">8</text>
<polyline fill="none" stroke="#000080" stroke-width="1.200" points="162.1,427.6 212.4,420.0 262.6,407.5 312.9,397.0 363.1,387.0 413.4,377.0 463.6,367.0 513.9,356.2"/>
<polyline fill="none" stroke="#ff00ff" stroke-width="1.200" points="162.1,375.3 212.4,370.2 262.6,370.2 312.9,370.2 363.1,370.2 413.4,370.2 463.6,370.2 513.9,370.2"/>
<polyline fill="none" stroke="#ffff00" stroke-width="1.200" points="162.1,501.0 212.4,408.7 262.6,346.7 312.9,370.2 363.1,371.9 413.4,363.5 463.6,351.7 513.9,346.7"/>
<rect x="602.500" y="406.500" width="95" height="72" fill="#fff" stroke="#000" shape-rendering="crispEdges"/>
<line x1="608" y1="420.5" x2="632" y2="420.5" stroke="#ff00ff" shape-rendering="crispEdges"/>
<text x="636.500" y="425.5">Series2</text>
<line x1="608" y1="444.5" x2="632" y2="444.5" stroke="#ffff00" shape-rendering="crispEdges"/>
<text x="636.500" y="449.5">Series3</text>
<line x1="608" y1="468.5" x2="632" y2="468.5" stroke="#000080" shape-rendering="crispEdges"/>
<text x="636.500" y="473.5">Series1</text>
<rect x="70" y="283" width="7" height="7" fill="#000" stroke="none"/>
<rect x="384.5" y="283" width="7" height="7" fill="#000" stroke="none"/>
<rect x="699" y="283" width="7" height="7" fill="#000" stroke="none"/>
<rect x="70" y="450.5" width="7" height="7" fill="#000" stroke="none"/>
<rect x="699" y="450.5" width="7" height="7" fill="#000" stroke="none"/>
<rect x="70" y="618" width="7" height="7" fill="#000" stroke="none"/>
<rect x="384.5" y="618" width="7" height="7" fill="#000" stroke="none"/>
<rect x="699" y="618" width="7" height="7" fill="#000" stroke="none"/>
</svg>
<div class="abs" style="left:663px;top:382px;width:60px;height:17px;background:#ffffe1;border:1px solid #000;font-size:11px;line-height:14px;padding-left:3px;white-space:nowrap">Chart Area</div><div id="tabbar"></div>
<svg class="abs" style="left:0;top:731px" width="260" height="18" viewBox="0 731 260 18">
 <path d="M66 731.500l8 15h136l8-15z" fill="#fff"/>
 <path d="M66.500 731l8 15.500h136l7.500-15.500" fill="none" stroke="#000" stroke-width="1.200"/>
 <path d="M65.500 732v15" stroke="#aca899"/>
 <g fill="#000"><rect x="5" y="736" width="1.500" height="8"/><path d="M11.500 736v8l-4.500-4z"/><path d="M27.500 736v8l-4.500-4z"/><path d="M39 736v8l4.500-4z"/><path d="M55 736v8l4.500-4z"/><rect x="60" y="736" width="1.500" height="8"/></g>
</svg>
<div class="abs" id="tabtxt" style="left:76px;top:733px;font-size:12px;font-weight:bold;white-space:nowrap;line-height:15px;transform:scaleX(1.142);transform-origin:0 0">LOG-01-003-010-011</div>
<div id="status"><div class="abs" style="left:4px;top:5px;font-size:11px">Ready</div>
<div class="sp" style="left:714px;width:33px"></div><div class="sp" style="left:749px;width:110px"></div><div class="sp" style="left:861px;width:25px"></div><div class="sp" style="left:888px;width:28px"></div><div class="sp" style="left:918px;width:26px"><span>NUM</span></div><div class="sp" style="left:946px;width:27px"></div><div class="sp" style="left:975px;width:24px"></div><div class="sp" style="left:1001px;width:20px"></div>
</div>

<div class="abs" style="left:1022px;top:731px;width:2px;height:37px;background:#f7f5ee"></div>

</body></html>
